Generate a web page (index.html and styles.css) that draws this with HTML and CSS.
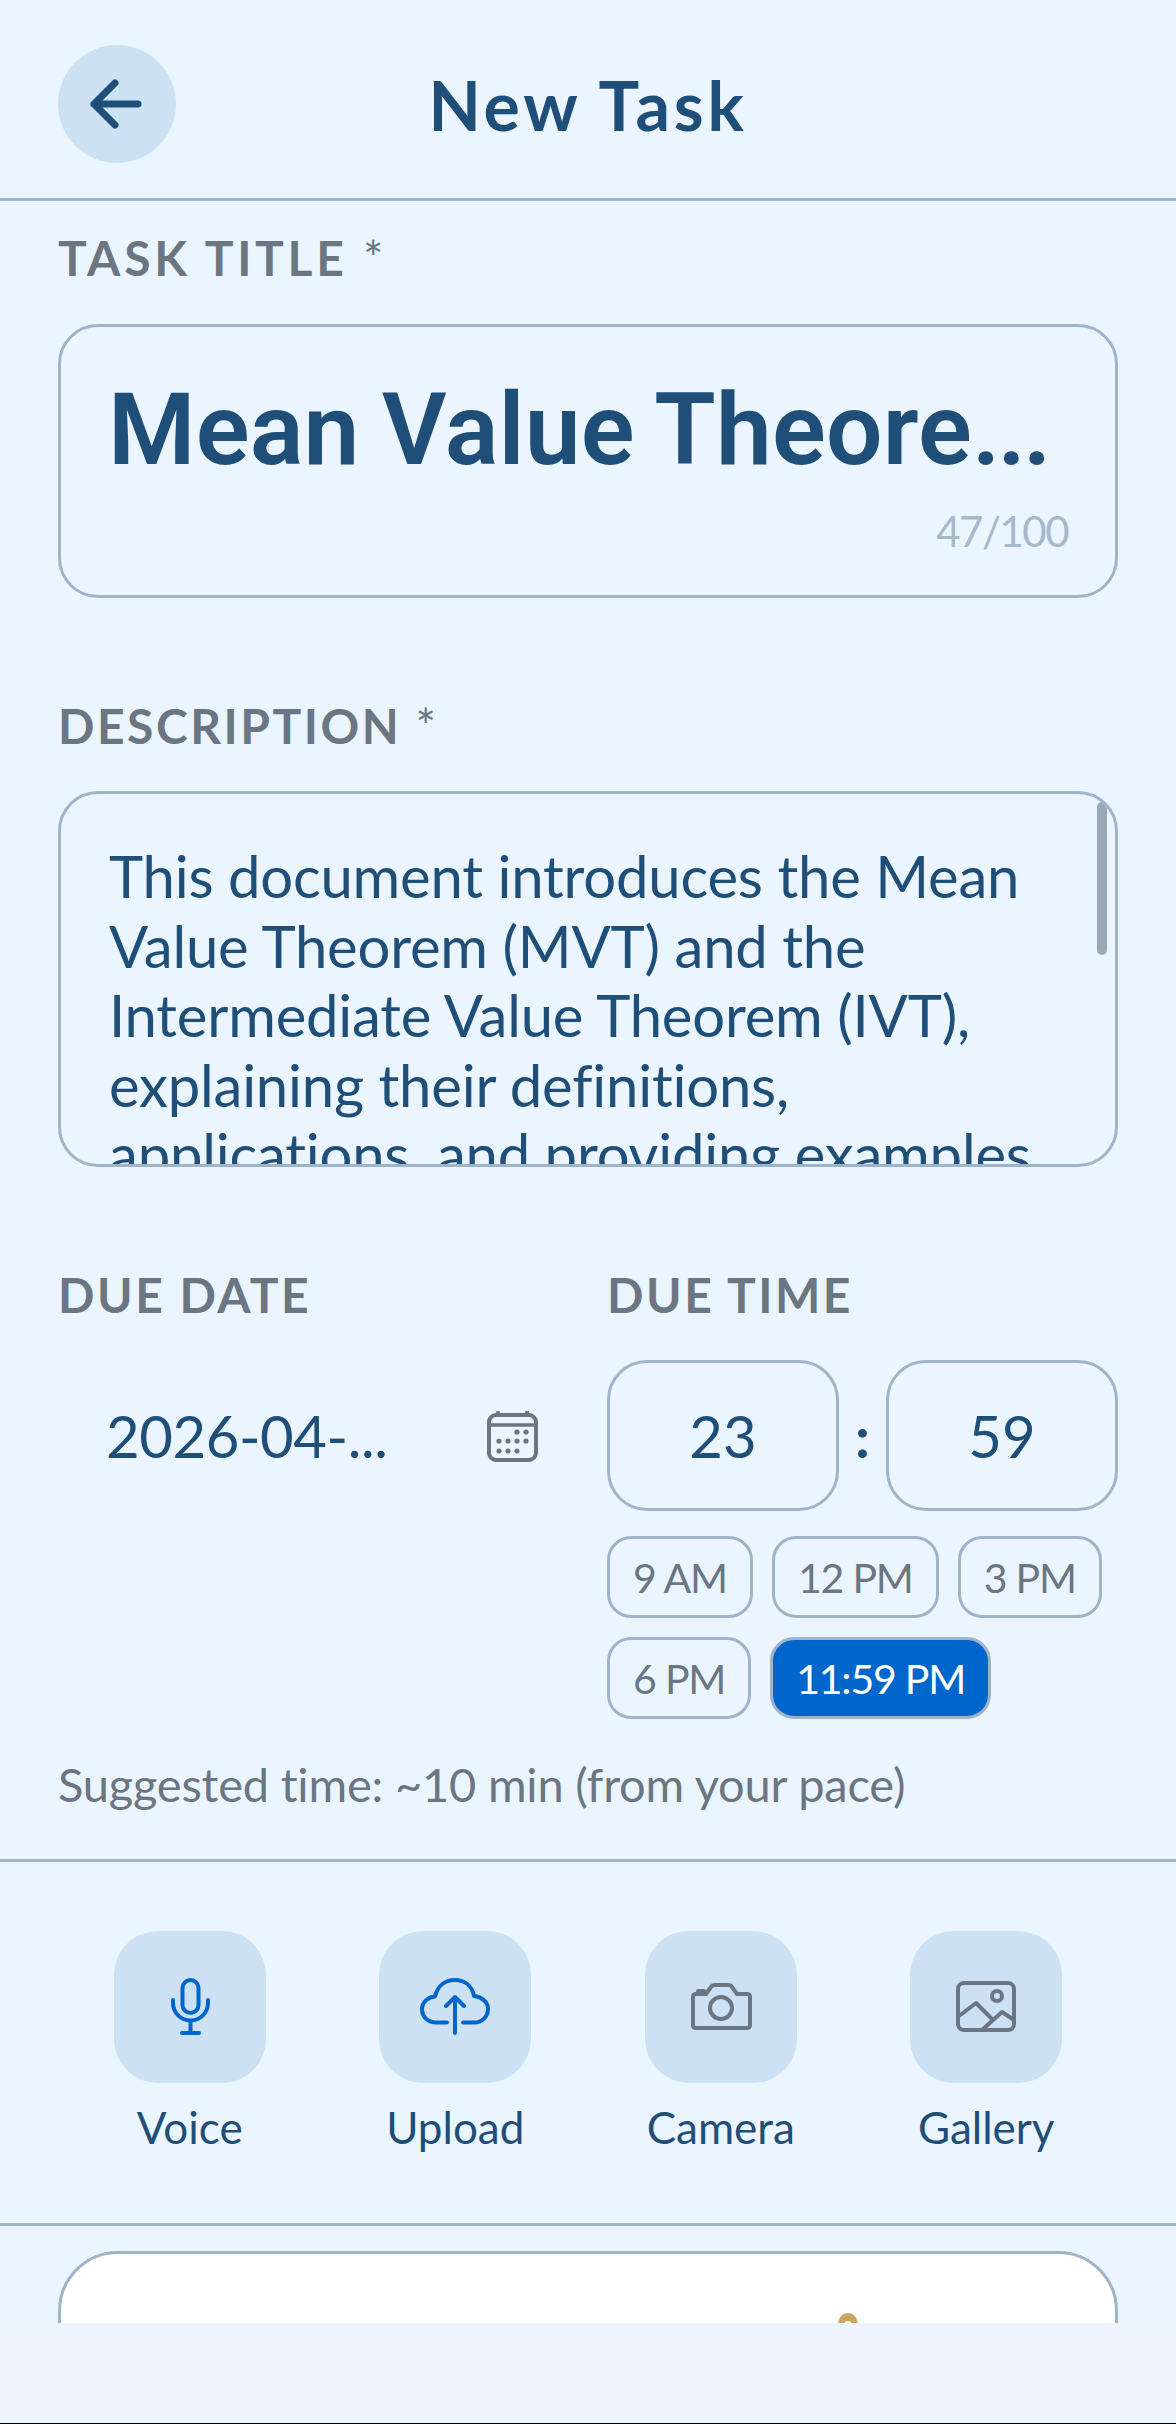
FILE: index.html
```html
<!DOCTYPE html>
<html>
<head>
  <meta charset="utf-8">
  <title>New Task</title>
  <link rel="stylesheet" href="styles.css">
</head>
<body>
  <div class="screen">
    <!-- Top bar -->
    <header class="topbar">
      <button class="back-btn">
        <svg width="58" height="52" viewBox="0 0 58 52"><path d="M27 5 6 26l21 21M6 26h44" fill="none" stroke="#1f4e79" stroke-width="7" stroke-linecap="round" stroke-linejoin="round"/></svg>
      </button>
      <h1 class="topbar-title">New Task</h1>
      <div class="topbar-spacer"></div>
    </header>

    <main class="content">
      <section class="form">
        <div class="field-label first">TASK TITLE <span class="req">*</span></div>
        <div class="title-box">
          <div class="title-text">Mean Value Theore<span class="title-dots">...</span></div>
          <div class="counter">47/100</div>
        </div>

        <div class="field-label">DESCRIPTION <span class="req">*</span></div>
        <div class="desc-box">
          <p class="desc-text">This document introduces the Mean Value Theorem (MVT) and the Intermediate Value Theorem (IVT), explaining their definitions, applications, and providing examples</p>
          <div class="scroll-thumb"></div>
        </div>

        <div class="due-grid">
          <div>
            <div class="field-label">DUE DATE</div>
            <div class="date-row">
              <span class="date-text">2026-04-...</span>
              <svg width="54" height="54" viewBox="0 0 54 54" fill="#6c7683">
                <rect x="3" y="6" width="47" height="45" rx="7" fill="none" stroke="#6c7683" stroke-width="4"/>
                <path d="M3 16h47M12 2v6M41 2v6" stroke="#6c7683" stroke-width="3.5" fill="none"/>
                <circle cx="31" cy="23" r="2.6"/><circle cx="40" cy="23" r="2.6"/>
                <circle cx="13" cy="32" r="2.6"/><circle cx="22" cy="32" r="2.6"/><circle cx="31" cy="32" r="2.6"/><circle cx="40" cy="32" r="2.6"/>
                <circle cx="13" cy="42" r="2.6"/><circle cx="22" cy="42" r="2.6"/><circle cx="31" cy="42" r="2.6"/>
              </svg>
            </div>
          </div>
          <div>
            <div class="field-label">DUE TIME</div>
            <div class="time-row">
              <div class="time-box">23</div>
              <div class="time-colon">:</div>
              <div class="time-box">59</div>
            </div>
            <div class="chips">
              <div class="chip">9 AM</div>
              <div class="chip">12 PM</div>
              <div class="chip">3 PM</div>
              <div class="chip">6 PM</div>
              <div class="chip active">11:59 PM</div>
            </div>
          </div>
        </div>

        <div class="suggested">Suggested time: ~10 min (from your pace)</div>
      </section>

      <!-- Attachment buttons -->
      <section class="tools">
        <div class="tool">
          <div class="tool-tile">
            <svg width="60" height="60" viewBox="0 0 60 60" fill="none" stroke="#0066cc" stroke-width="4" stroke-linecap="round">
              <rect x="22.5" y="3" width="16" height="33" rx="8"/>
              <path d="M13 23v3a17.5 17.5 0 0 0 35 0v-3M30.5 44v12M22 56h17"/>
            </svg>
          </div>
          <div class="tool-label">Voice</div>
        </div>
        <div class="tool">
          <div class="tool-tile">
            <svg width="80" height="60" viewBox="0 0 80 60" fill="none" stroke="#0066cc" stroke-width="4" stroke-linecap="round" stroke-linejoin="round">
              <path d="M32 45.5H21C12 45.5 7 39 7 32.5 7 25 13 20 20 19.5 22.5 9 30 3 40 3 50 3 57 9 59 19 67 20 73 25 73 32 73 39.5 67 45.5 59 45.5H48"/>
              <path d="M40 56V20M31 29l9-9 9 9"/>
            </svg>
          </div>
          <div class="tool-label">Upload</div>
        </div>
        <div class="tool">
          <div class="tool-tile">
            <svg width="70" height="60" viewBox="0 0 70 60" fill="none" stroke="#6c7683" stroke-width="4" stroke-linecap="round" stroke-linejoin="round">
              <path d="M10 17H20L25 10Q26 8 29 8H42Q45 8 46 10L51 17H61Q64 17 64 20V48Q64 51 61 51H10Q7 51 7 48V20Q7 17 10 17Z"/>
              <path d="M12 14H18"/>
              <circle cx="35" cy="31" r="11"/>
            </svg>
          </div>
          <div class="tool-label">Camera</div>
        </div>
        <div class="tool">
          <div class="tool-tile">
            <svg width="70" height="60" viewBox="0 0 70 60" fill="none" stroke="#6c7683" stroke-width="4" stroke-linecap="round" stroke-linejoin="round">
              <rect x="7" y="6" width="56" height="47" rx="6"/>
              <circle cx="46" cy="19" r="5"/>
              <path d="M8 39 25 26 41 42M31 53 51 35 63 43"/>
            </svg>
          </div>
          <div class="tool-label">Gallery</div>
        </div>
      </section>

      <section class="preview-wrap">
        <div class="preview-card">
          <svg class="preview-mark" width="24" height="14" viewBox="0 0 24 14"><path d="M2 14C2 6 6 1 12 1s10 5 10 13h-6c0-3-1-5-4-5s-4 2-4 5Z" fill="#c9a75f"/></svg>
        </div>
      </section>
    </main>

    <footer class="bottom"></footer>
  </div>
</body>
</html>
```

FILE: styles.css
```css
/* General Page Styling */
* {
  box-sizing: border-box;
}

body {
  margin: 0;
  padding: 0;
  background-color: #ebf5ff;
  font-family: "Lato", sans-serif;
  color: #1f4e79;
}

.screen {
  width: 1176px;
  height: 2424px;
  display: flex;
  flex-direction: column;
  overflow: hidden;
}

/* Top bar */
.topbar {
  display: flex;
  align-items: center;
  flex-shrink: 0;
  height: 201px;
  padding: 46px 58px 36px;
  border-bottom: 3px solid #9fb4c9;
}

.back-btn {
  width: 118px;
  height: 118px;
  border: none;
  border-radius: 50%;
  padding: 0;
  background-color: #cde1f4;
  display: flex;
  align-items: center;
  justify-content: center;
}

.topbar-title {
  flex: 1;
  margin: 0;
  text-align: center;
  font-size: 68px;
  font-weight: 700;
  letter-spacing: 3.8px;
  color: #1f4e79;
}

.topbar-spacer {
  width: 118px;
}

/* Main scroll area */
.content {
  flex: 1;
  min-height: 0;
  overflow: hidden;
}

.form {
  padding: 29px 58px 0;
}

.field-label {
  height: 56px;
  margin: 100px 0 37px;
  font-size: 48px;
  line-height: 56px;
  font-weight: 700;
  letter-spacing: 2.5px;
  color: #6c7683;
}

.field-label.first {
  margin: 0 0 38px;
  letter-spacing: 3.7px;
}

.req {
  font-weight: 400;
}

.title-box {
  height: 274px;
  border: 3px solid #9fb4c9;
  border-radius: 40px;
  padding: 44px 47px 0;
  display: flex;
  flex-direction: column;
}

.title-text {
  font-family: "Roboto", sans-serif;
  font-size: 100px;
  line-height: 118px;
  font-weight: 600;
  letter-spacing: 0.2px;
  word-spacing: -3px;
  color: #1f4e79;
  white-space: nowrap;
}

.title-dots {
  letter-spacing: -3px;
}

.counter {
  margin-top: 17px;
  align-self: flex-end;
  font-size: 42px;
  line-height: 50px;
  letter-spacing: -1.5px;
  color: #a6b8cc;
}

.desc-box {
  position: relative;
  height: 376px;
  border: 3px solid #9fb4c9;
  border-radius: 40px;
  padding: 47px 48px 0;
  overflow: hidden;
}

.desc-text {
  margin: 0;
  font-size: 58px;
  line-height: 69.5px;
  letter-spacing: -0.2px;
  color: #1f4e79;
}

.scroll-thumb {
  position: absolute;
  top: 8px;
  right: 8px;
  width: 10px;
  height: 153px;
  border-radius: 5px;
  background-color: #9aa8b8;
}

/* Due date and time */
.due-grid {
  display: grid;
  grid-template-columns: 1fr 1fr;
  column-gap: 38px;
}

.date-row {
  height: 151px;
  display: flex;
  align-items: center;
  justify-content: space-between;
  padding: 0 29px 0 48px;
}

.date-text {
  font-size: 58px;
  letter-spacing: -0.4px;
  color: #1f4e79;
}

.time-row {
  display: flex;
  align-items: center;
}

.time-box {
  width: 232px;
  height: 151px;
  border: 3px solid #9fb4c9;
  border-radius: 40px;
  display: flex;
  align-items: center;
  justify-content: center;
  font-size: 58px;
  color: #1f4e79;
}

.time-colon {
  flex: 1;
  text-align: center;
  font-size: 58px;
  font-weight: 700;
  color: #1f4e79;
}

.chips {
  display: flex;
  flex-wrap: wrap;
  gap: 19px;
  margin-top: 25px;
}

.chip {
  height: 82px;
  padding: 0 23px;
  border: 3px solid #9fb4c9;
  border-radius: 24px;
  display: flex;
  align-items: center;
  font-size: 41px;
  letter-spacing: -1.2px;
  color: #6c7683;
}

.chip.active {
  background-color: #0066cc;
  color: #ffffff;
}

.suggested {
  margin-top: 37px;
  font-size: 47px;
  line-height: 56px;
  letter-spacing: -0.2px;
  color: #6c7683;
}

/* Attachment buttons */
.tools {
  display: grid;
  grid-template-columns: repeat(4, 1fr);
  margin-top: 47px;
  padding: 69px 57px 0;
  height: 367px;
  border-top: 3px solid #9fb4c9;
  border-bottom: 3px solid #9fb4c9;
}

.tool {
  display: flex;
  flex-direction: column;
  align-items: center;
}

.tool-tile {
  width: 152px;
  height: 152px;
  border-radius: 44px;
  background-color: #cde1f4;
  display: flex;
  align-items: center;
  justify-content: center;
}

.tool-label {
  margin-top: 18px;
  font-size: 44px;
  line-height: 52px;
  color: #1f4e79;
}

/* Card cut off by the bottom area */
.preview-wrap {
  padding: 25px 58px 0;
}

.preview-card {
  position: relative;
  height: 300px;
  border: 3px solid #9fb4c9;
  border-radius: 60px;
  background-color: #ffffff;
}

.preview-mark {
  position: absolute;
  top: 58px;
  left: 775px;
}

.bottom {
  flex-shrink: 0;
  height: 101px;
  background-color: #eef4fd;
  border-bottom: 1px solid #000000;
}
```
